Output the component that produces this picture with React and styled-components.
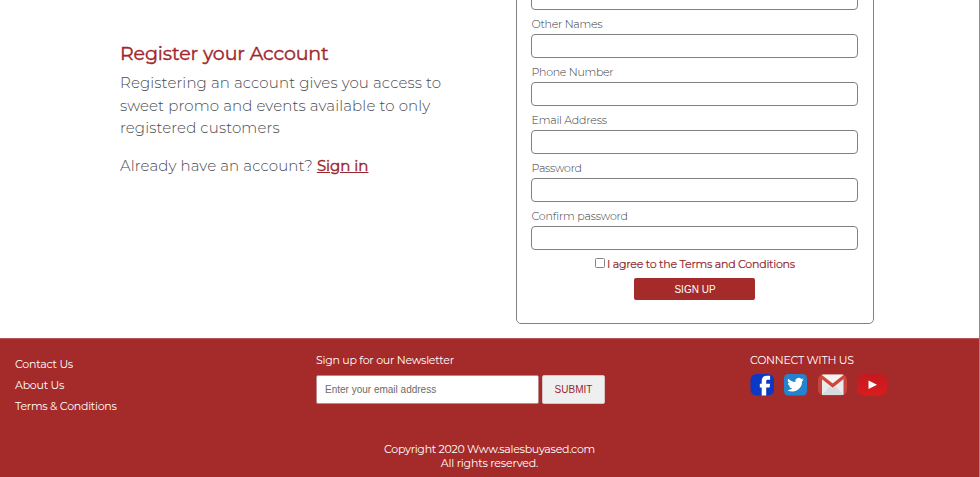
import React from "react";
import styled, { createGlobalStyle } from "styled-components";

const Global = createGlobalStyle`
  * { box-sizing: border-box; }
  body { margin: 0; background: #fff; font-family: Montserrat, Inter, sans-serif; overflow: hidden; }
  h1, p, ul { margin: 0; padding: 0; }
`;
const Page = styled.div`
  width: 980px;
  height: 477px;
  overflow: hidden;
  display: flex;
  flex-direction: column;
  border-right: 1px solid #8e8e8e;
`;
const Main = styled.main`
  display: flex;
  height: 338px;
  flex: none;
`;
const Intro = styled.section`
  width: 396px;
  margin-left: 120px;
  padding-top: 42px;
  color: #4a4b4f;
`;
const Title = styled.h1`
  font-size: 19px;
  line-height: 24px;
  font-weight: 400;
  -webkit-text-stroke: 0.4px;
  color: #a1262b;
  letter-spacing: -0.12px;
  white-space: nowrap;
`;
const Line = styled.span`
  display: block;
  white-space: nowrap;
  letter-spacing: ${(p) => p.$track}px;
`;
const Lead = styled.p`
  margin-top: ${(p) => p.$top}px;
  font-size: 15px;
  line-height: 22.5px;
  font-weight: 300;
`;
const SignIn = styled.a`
  font-weight: 400;
  -webkit-text-stroke: 0.4px;
  color: #98262b;
  letter-spacing: -0.03px;
  text-decoration: underline;
`;
const Card = styled.form`
  width: 358px;
  height: 354px;
  margin-top: -30px;
  padding: 15px 14px 0;
  border: 1px solid #808285;
  border-radius: 5px;
  display: flex;
  flex-direction: column;
`;
const Label = styled.label`
  height: 24px;
  padding-top: 7px;
  font-size: 11px;
  line-height: 14px;
  font-weight: 300;
  color: #39393b;
  letter-spacing: ${(p) => p.$track}px;
`;
const Field = styled.input`
  flex: none;
  width: 327px;
  height: 24px;
  margin: 0;
  border: 1px solid #808285;
  border-radius: 4px;
  background: #fff;
`;
const Labelled = styled.div`
  display: flex;
  flex-direction: column;
  ${Label} { padding-left: 0.5px; }
`;
const Agree = styled.label`
  display: flex;
  align-items: center;
  margin: 7px 0 0 64px;
  height: 14px;
  font-size: 11px;
  font-weight: 400;
  -webkit-text-stroke: 0.2px;
  color: #932a2e;
  white-space: nowrap;
  letter-spacing: -0.24px;
`;
const Check = styled.input`
  width: 10px;
  height: 10px;
  margin: -2px 2px 0 0;
  appearance: none;
  border: 1px solid #858585;
  border-radius: 1.5px;
  background: #fff;
`;
const SignUp = styled.button`
  width: 121px;
  height: 22px;
  margin: 7px 0 0 103px;
  padding: 0 0 0 1px;
  border: 0;
  border-radius: 2px;
  background: #a52a2a;
  color: #fff;
  font: 10px "Liberation Sans", Arial, sans-serif;
`;
const Footer = styled.footer`
  flex: none;
  height: 139px;
  background: #a52a2a;
  color: #fff;
  font-size: 11px;
  line-height: 14px;
  border-top: 1px solid #b65555;
`;
const Columns = styled.div`
  display: grid;
  grid-template-columns: 301px 434px 1fr;
  height: 103px;
  padding-left: 15px;
`;
const Links = styled.ul`
  list-style: none;
  padding-top: 15px;
  line-height: 21px;
`;
const Newsletter = styled.div`
  padding-top: 14px;
`;
const Row = styled.div`
  display: flex;
  gap: ${(p) => p.$gap}px;
  margin-top: ${(p) => p.$top}px;
`;
const Email = styled.input`
  width: 223px;
  height: 29px;
  padding: 0 8px;
  border: 1px solid #b98a8a;
  border-radius: 2px;
  background: #fff;
  font: 10px "Liberation Sans", Arial, sans-serif;
  &::placeholder { color: #6b6b6b; }
`;
const Submit = styled.button`
  width: 63px;
  height: 29px;
  padding: 0;
  border: 1px solid #d8c4c4;
  border-radius: 2px;
  background: #efefef;
  color: #98282c;
  font: 10px "Liberation Sans", Arial, sans-serif;
`;
const Legal = styled.div`
  display: flex;
  flex-direction: column;
  align-items: center;
`;
const Icons = styled.div`
  display: flex;
  margin-top: 6px;
  svg { display: block; }
`;

const fields = [
  ["Other Names", -0.27],
  ["Phone Number", -0.28],
  ["Email Address", -0.2],
  ["Password", -0.25],
  ["Confirm password", -0.16],
];

const Social = () => (
  <Icons>
    <svg width="34" height="24" viewBox="0 0 34 24">
      <rect x="0.5" y="1" width="23.5" height="21.5" rx="6" fill="#0b38c4" />
      <path d="M11.7 22.5v-8H9.8v-3.8h1.9V8.2c0-3.4 1.7-5.4 5-5.4h3.4v4h-2.1c-1.3 0-1.8.6-1.8 1.7v2.2h3.9l-.5 3.8h-3.4v8z" fill="#fff" />
    </svg>
    <svg width="34" height="24" viewBox="0 0 34 24">
      <rect x="0" y="1" width="23" height="21.5" rx="4.5" fill="#2582cf" />
      <g transform="translate(3.2 3.4) scale(.69)"><path d="M23.95 4.57a10 10 0 0 1-2.82.77 4.96 4.96 0 0 0 2.16-2.72c-.95.55-2 .96-3.13 1.18a4.92 4.92 0 0 0-8.38 4.48C7.69 8.1 4.07 6.13 1.64 3.16a4.9 4.9 0 0 0 1.52 6.57 4.9 4.9 0 0 1-2.23-.61v.06a4.92 4.92 0 0 0 3.95 4.83 5 5 0 0 1-2.21.08 4.94 4.94 0 0 0 4.6 3.42A9.87 9.87 0 0 1 0 19.54a14 14 0 0 0 7.55 2.21c9.05 0 14-7.5 14-13.98l-.02-.63a9.9 9.9 0 0 0 2.42-2.57z" fill="#fff" /></g>
    </svg>
    <svg width="38" height="24" viewBox="0 0 38 24">
      <rect x="0" y="1" width="29" height="21.5" rx="6" fill="#c9443c" />
      <path d="M4 2h21.500v20H4z" fill="#e9eaec" />
      <path d="m4 22 7.500-8.500 3.200 2 3.200-2L25.500 22z" fill="#d9dade" />
      <path d="M4 1.500h21.500L14.700 10z" fill="#f4f4f4" />
      <path d="M2.800 3.200 14.700 12.600 26.500 3.200" fill="none" stroke="#cf463d" strokeWidth="3.2" />
    </svg>
    <svg width="32" height="24" viewBox="0 0 32 24">
      <defs>
        <linearGradient id="play" x2="0" y2="1">
          <stop offset="0" stopColor="#c3191e" />
          <stop offset="1" stopColor="#da1c1e" />
        </linearGradient>
      </defs>
      <rect x="1" y="1" width="30" height="21.5" rx="7" fill="url(#play)" />
      <path d="m12.500 7.500 8.500 4.200-8.500 4.300z" fill="#fff" />
    </svg>
  </Icons>
);

export default function App() {
  return (
    <Page>
      <Global />
      <Main>
        <Intro>
          <Title>Register your Account</Title>
          <Lead $top={6}>
            <Line $track={0.11}>Registering an account gives you access to</Line>
            <Line $track={0.12}>sweet promo and events available to only</Line>
            <Line $track={0.1}>registered customers</Line>
          </Lead>
          <Lead $top={15}>
            <Line $track={0.12}>Already have an account? <SignIn>Sign in</SignIn></Line>
          </Lead>
        </Intro>
        <Card>
          <Field />
          {fields.map(([name, track]) => (
            <Labelled key={name}>
              <Label $track={track}>{name}</Label>
              <Field />
            </Labelled>
          ))}
          <Agree><Check type="checkbox" />I agree to the Terms and Conditions</Agree>
          <SignUp type="button">SIGN UP</SignUp>
        </Card>
      </Main>
      <Footer>
        <Columns>
          <Links>
            <li><Line as="a" $track={-0.23}>Contact Us</Line></li>
            <li><Line as="a" $track={-0.25}>About Us</Line></li>
            <li><Line as="a" $track={-0.25}>Terms &amp; Conditions</Line></li>
          </Links>
          <Newsletter>
            <Line $track={-0.25}>Sign up for our Newsletter</Line>
            <Row $gap={3} $top={8}>
              <Email placeholder="Enter your email address" />
              <Submit>SUBMIT</Submit>
            </Row>
          </Newsletter>
          <Newsletter>
            <Line $track={-0.27}>CONNECT WITH US</Line>
            <Social />
          </Newsletter>
        </Columns>
        <Legal>
          <Line $track={-0.28}>Copyright 2020 Www.salesbuyased.com</Line>
          <Line $track={-0.2}>All rights reserved.</Line>
        </Legal>
      </Footer>
    </Page>
  );
}
